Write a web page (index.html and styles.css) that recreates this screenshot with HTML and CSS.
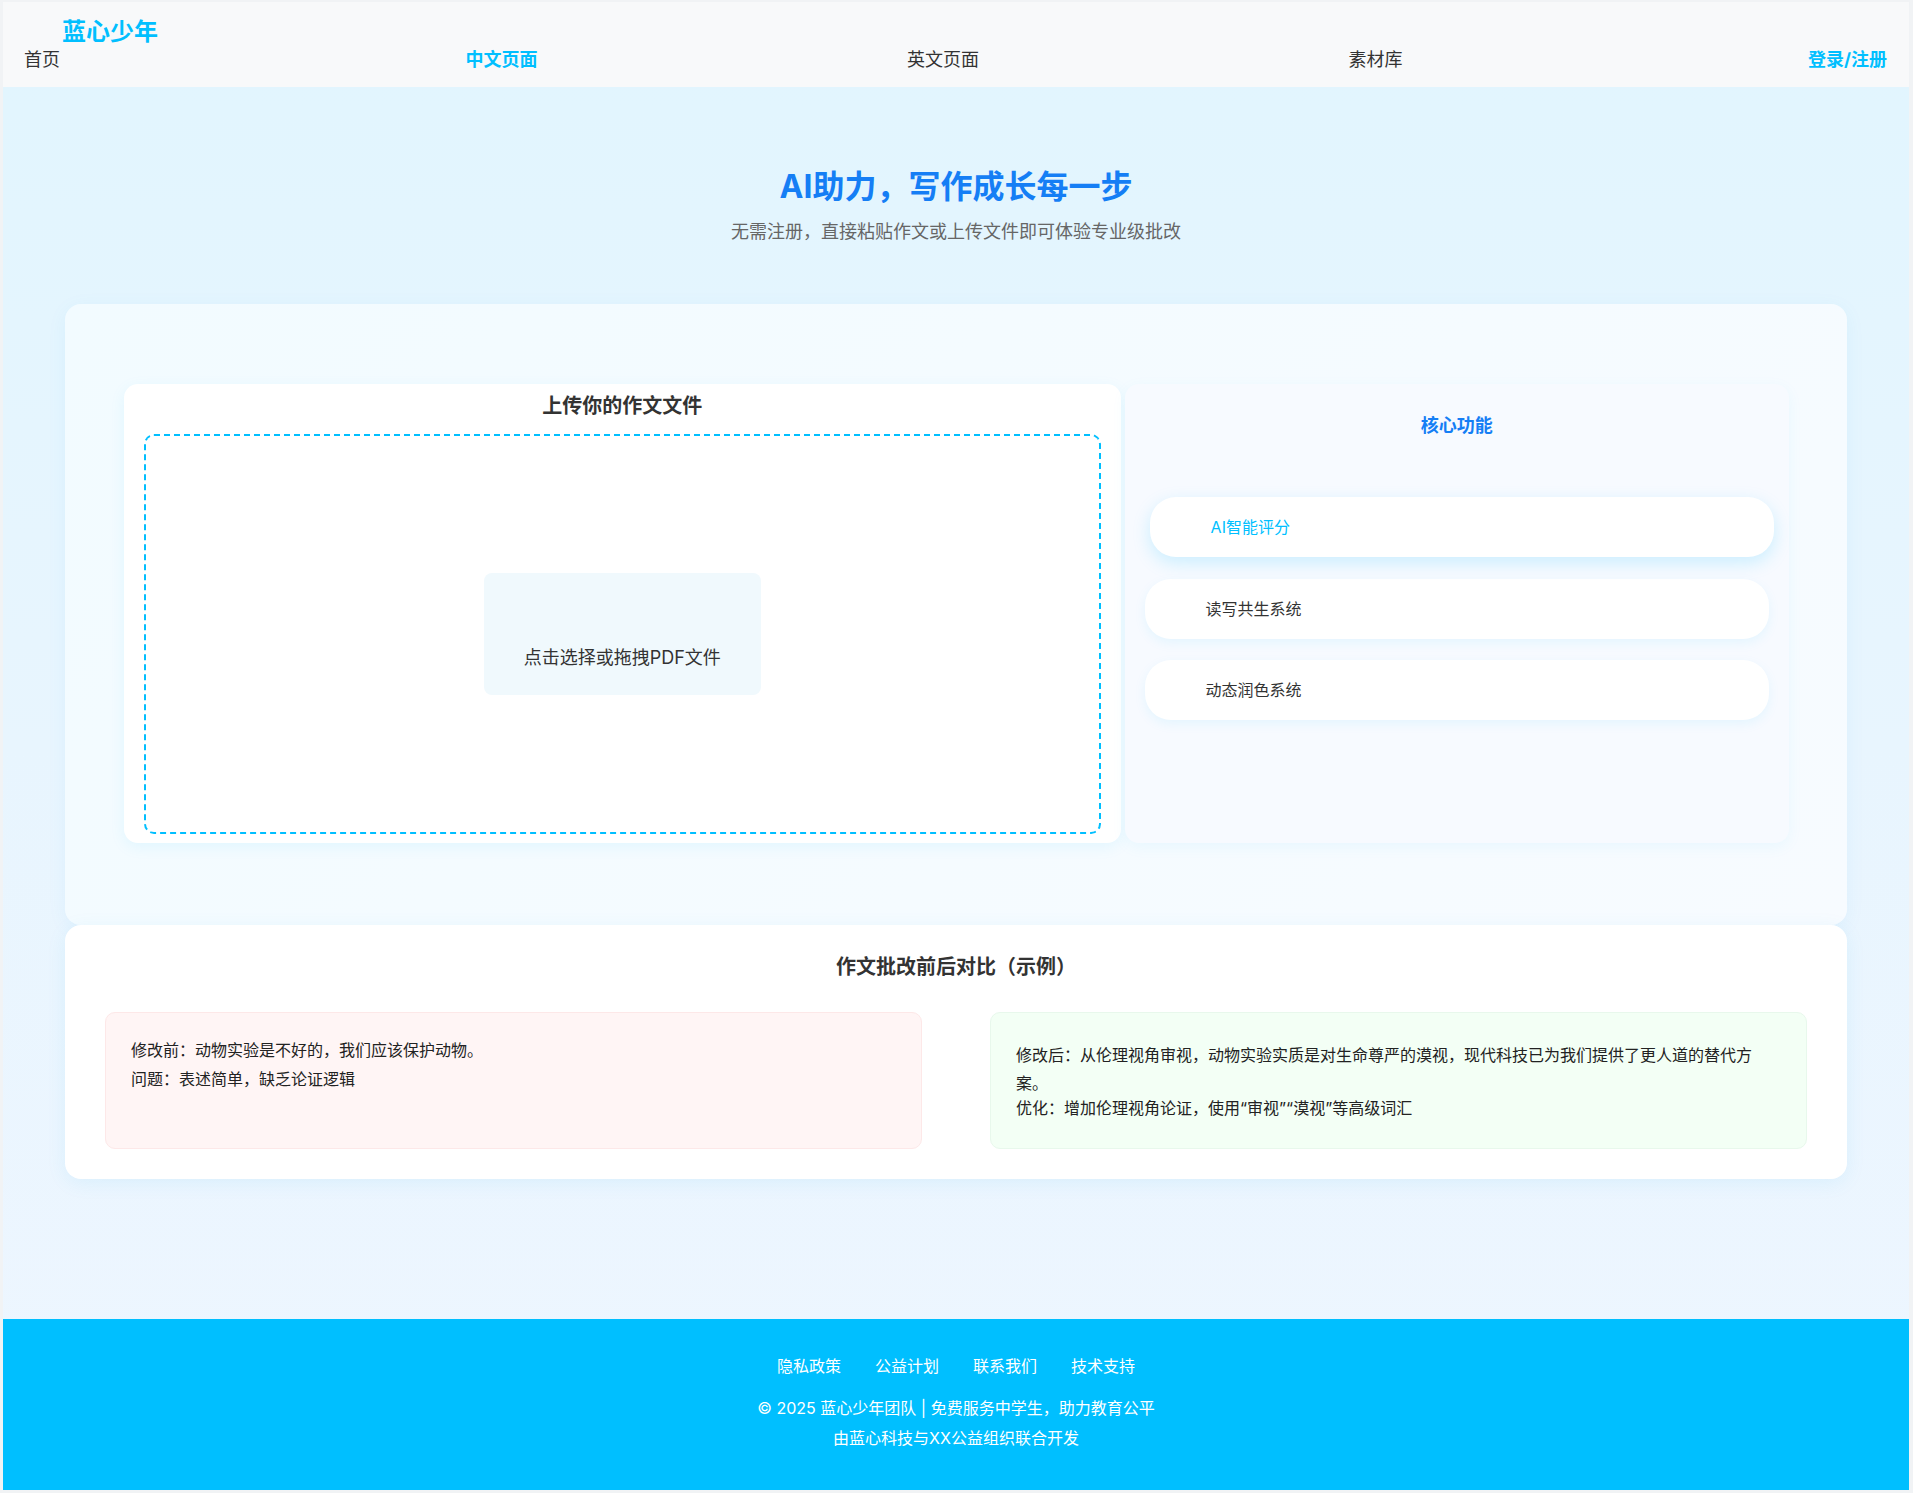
FILE: index.html
```html
<!DOCTYPE html>
<html lang="zh-CN">
<head>
<meta charset="utf-8">
<title>蓝心少年 - AI作文批改</title>
<link rel="stylesheet" href="styles.css">
</head>
<body>
<header class="site-header">
  <div class="logo">蓝心少年</div>
  <nav class="main-nav">
    <a class="nav-link" href="#">首页</a>
    <a class="nav-link is-active" href="#">中文页面</a>
    <a class="nav-link" href="#">英文页面</a>
    <a class="nav-link" href="#">素材库</a>
    <a class="nav-link is-login" href="#">登录/注册</a>
  </nav>
</header>

<main class="page">
  <section class="hero">
    <h1 class="hero-title">AI助力，写作成长每一步</h1>
    <p class="hero-sub">无需注册，直接粘贴作文或上传文件即可体验专业级批改</p>
  </section>

  <section class="upload-card">
    <div class="upload-grid">
      <div class="upload-panel">
        <h3 class="panel-title">上传你的作文文件</h3>
        <div class="dropzone">
          <div class="drop-button">
            <span class="drop-icon"></span>
            <span class="drop-text">点击选择或拖拽PDF文件</span>
          </div>
        </div>
      </div>
      <aside class="features">
        <h3 class="features-title">核心功能</h3>
        <ul class="feature-list">
          <li class="feature-item is-active">AI智能评分</li>
          <li class="feature-item">读写共生系统</li>
          <li class="feature-item">动态润色系统</li>
        </ul>
      </aside>
    </div>
  </section>

  <section class="compare">
    <h3 class="compare-title">作文批改前后对比（示例）</h3>
    <div class="compare-grid">
      <div class="compare-box before">
        <p class="compare-main">修改前：动物实验是不好的，我们应该保护动物。</p>
        <p class="compare-note">问题：表述简单，缺乏论证逻辑</p>
      </div>
      <div class="compare-box after">
        <p class="compare-main">修改后：从伦理视角审视，动物实验实质是对生命尊严的漠视，现代科技已为我们提供了更人道的替代方案。</p>
        <p class="compare-note">优化：增加伦理视角论证，使用“审视”“漠视”等高级词汇</p>
      </div>
    </div>
  </section>
</main>

<footer class="site-footer">
  <div class="footer-links">
    <a href="#">隐私政策</a>
    <a href="#">公益计划</a>
    <a href="#">联系我们</a>
    <a href="#">技术支持</a>
  </div>
  <p class="footer-copy">© 2025 蓝心少年团队 | 免费服务中学生，助力教育公平</p>
  <p class="footer-dev">由蓝心科技与XX公益组织联合开发</p>
</footer>
</body>
</html>
```

FILE: styles.css
```css
* { box-sizing: border-box; }

html {
  background: #f1f3f5;
}

body {
  margin: 2px 4px 2px 3px;
  font-family: Inter, "Noto Sans CJK SC", sans-serif;
  color: #333;
  background: linear-gradient(180deg, #e1f5fe 0%, #e8f5fe 50%, #eef6ff 100%);
}

a { text-decoration: none; color: inherit; }

/* Header */
.site-header {
  background: #f8f9fa;
  padding: 15px 22px 14px 21px;
  display: flex;
  flex-direction: column;
}

.logo {
  font-size: 24px;
  font-weight: 700;
  color: #00bfff;
  line-height: 30px;
  margin-left: 38px;
}

.main-nav {
  display: flex;
  justify-content: space-between;
}

.nav-link {
  font-size: 18px;
  line-height: 26px;
  color: #333;
}

.nav-link:first-child { margin-right: 36px; }
.nav-link:last-child { margin-left: 36px; }

.nav-link.is-active,
.nav-link.is-login {
  color: #00bfff;
  font-weight: 700;
}

/* Main */
.page {
  padding: 0 62px 140px;
}

.hero {
  text-align: center;
  padding-top: 80px;
}

.hero-title {
  margin: 0;
  font-size: 32px;
  line-height: 40px;
  font-weight: 700;
  color: #157ef5;
}

.hero-sub {
  margin: 11px 0 0;
  font-size: 18px;
  line-height: 27px;
  color: #666;
}

.upload-card {
  margin-top: 59px;
  padding: 80px 58px 82px 59px;
  border-radius: 16px;
  background: linear-gradient(135deg, #f2fbff 0%, #f7fbff 100%);
  box-shadow: 0 4px 20px rgba(0, 160, 230, 0.06);
}

.upload-grid {
  display: grid;
  grid-template-columns: 3fr 2fr;
  gap: 4px;
}

.upload-panel {
  background: #fff;
  border-radius: 14px;
  padding: 8px 20px 9px;
  box-shadow: 0 4px 15px rgba(0, 191, 255, 0.08);
}

.panel-title {
  margin: 0 0 14px;
  text-align: center;
  font-size: 20px;
  line-height: 28px;
  font-weight: 700;
  color: #333;
}

.dropzone {
  height: 400px;
  border: 2px dashed #00bfff;
  border-radius: 10px;
  display: flex;
  align-items: center;
  justify-content: center;
}

.drop-button {
  display: flex;
  flex-direction: column;
  align-items: center;
  padding: 16px 40px 25px;
  background: #f0f9fd;
  border-radius: 8px;
}

.drop-icon {
  display: block;
  height: 46px;
  margin-bottom: 10px;
}

.drop-text {
  font-size: 18px;
  line-height: 25px;
  color: #333;
}

.features {
  background: #f7faff;
  border-radius: 14px;
  padding: 28px 20px;
  box-shadow: 0 4px 15px rgba(0, 191, 255, 0.06);
}

.features-title {
  margin: 0 0 59px;
  text-align: center;
  font-size: 18px;
  line-height: 27px;
  font-weight: 700;
  color: #157ef5;
}

.feature-list {
  list-style: none;
  margin: 0;
  padding: 0;
}

.feature-item {
  height: 60px;
  margin-bottom: 21px;
  padding-left: 61px;
  padding-bottom: 2px;
  display: flex;
  align-items: center;
  background: #fff;
  border-radius: 26px;
  font-size: 16px;
  color: #333;
  box-shadow: 0 4px 12px rgba(0, 191, 255, 0.08);
}

.feature-item.is-active {
  color: #00bfff;
  transform: translate(5px, -1px);
  box-shadow: 0 6px 18px rgba(0, 191, 255, 0.18);
}

/* Compare */
.compare {
  background: #fff;
  border-radius: 16px;
  padding: 28px 40px 30px;
  box-shadow: 0 4px 20px rgba(0, 160, 230, 0.08);
}

.compare-title {
  margin: 0 0 31px;
  text-align: center;
  font-size: 20px;
  line-height: 28px;
  font-weight: 700;
  color: #333;
}

.compare-grid {
  display: grid;
  grid-template-columns: 1fr 1fr;
  gap: 68px;
}

.compare-box {
  border-radius: 10px;
  padding: 23px 30px 28px 25px;
}

.compare-box.before {
  background: #fff5f5;
  border: 1px solid #fde8e8;
}

.compare-box.after {
  background: #f3fff5;
  border: 1px solid #e8f8ec;
  padding-top: 28px;
}

.compare-main,
.compare-note {
  margin: 0;
  font-size: 16px;
  color: #222;
}

.compare-main {
  line-height: 28px;
}

.compare-note {
  line-height: 23px;
}

.compare-box.before .compare-note {
  margin-top: 3.5px;
}

/* Footer */
.site-footer {
  background: #00bfff;
  color: #fff;
  text-align: center;
  padding: 35px 0 40px;
}

.footer-links {
  display: flex;
  justify-content: center;
  gap: 34px;
}

.footer-links a {
  font-size: 16px;
  line-height: 24px;
  color: #fff;
}

.footer-copy {
  margin: 18px 0 0;
  font-size: 16px;
  line-height: 24px;
}

.footer-dev {
  margin: 6px 0 0;
  font-size: 16px;
  line-height: 24px;
}
```
